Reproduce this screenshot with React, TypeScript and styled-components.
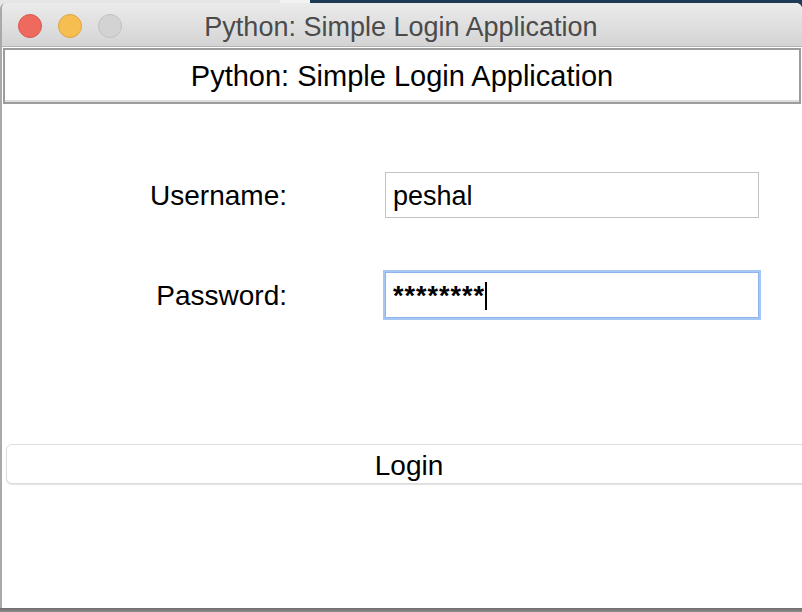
import React, { FC } from 'react';
import styled, { createGlobalStyle } from 'styled-components';

const GlobalStyle = createGlobalStyle`
  html, body {
    margin: 0;
    padding: 0;
  }
  body {
    font-family: "Liberation Sans", Arial, Helvetica, sans-serif;
    background: #1d3b57;
  }
`;

const Desktop = styled.div`
  width: 802px;
  height: 612px;
  display: flex;
  flex-direction: column;
  overflow: hidden;
  background: linear-gradient(to right, #e6e6e6 0, #e6e6e6 280px, #f2f2f2 280px, #f2f2f2 310px, #1d3b57 310px);
`;

const Window = styled.div`
  margin-top: 3px;
  height: 605px;
  display: flex;
  flex-direction: column;
  background: #ffffff;
  border-left: 2px solid #a9a9a9;
  border-radius: 6px 6px 0 0;
  overflow: hidden;
`;

const Shadow = styled.div`
  flex: 1;
  background: linear-gradient(to bottom, #6e6e6e, #8c8c8c);
`;

const TitleBar = styled.div`
  position: relative;
  height: 43px;
  flex-shrink: 0;
  display: flex;
  align-items: center;
  justify-content: center;
  background: linear-gradient(to bottom, #ebebeb, #d4d4d4);
  border-bottom: 1px solid #b4b4b4;
`;

const Lights = styled.div`
  position: absolute;
  left: 16px;
  top: 11px;
  display: flex;
  gap: 16px;
`;

const Light = styled.span<{ $fill: string; $edge: string }>`
  width: 22px;
  height: 22px;
  border-radius: 50%;
  background: ${(p) => p.$fill};
  border: 1px solid ${(p) => p.$edge};
`;

const WindowTitle = styled.div`
  font-size: 27px;
  color: #4b4b4b;
  margin-left: -2px;
  padding-top: 5px;
`;

const Content = styled.div`
  flex: 1;
  display: flex;
  flex-direction: column;
`;

const Header = styled.div`
  margin: 1px 1px 0 1px;
  height: 52px;
  display: flex;
  align-items: center;
  justify-content: center;
  border: 2px solid #9c9c9c;
  box-shadow: inset 0 -2px 0 #dedede;
  font-size: 29px;
  color: #000;
`;

const Form = styled.div`
  margin-top: 68px;
  display: grid;
  grid-template-columns: 285px 374px;
  grid-auto-rows: 46px;
  column-gap: 98px;
  row-gap: 54px;
`;

const Label = styled.div`
  align-self: center;
  text-align: right;
  font-size: 28px;
  color: #000;
  padding-top: 2px;
`;

const Entry = styled.div<{ $focused?: boolean }>`
  box-sizing: border-box;
  height: 46px;
  display: flex;
  align-items: center;
  padding: 3px 0 0 7px;
  font-size: 27px;
  color: #000;
  background: #fff;
  border: 1px solid ${(p) => (p.$focused ? '#8db4ec' : '#c3c3c3')};
  box-shadow: ${(p) => (p.$focused ? '0 0 0 2px #a6c7f5' : 'none')};
`;

const Masked = styled.span`
  letter-spacing: 1px;
  font-weight: bold;
`;

const Caret = styled.span`
  width: 2px;
  height: 28px;
  margin-top: -2px;
  background: #000;
`;

const LoginButton = styled.button`
  margin: 126px -10px 0 4px;
  height: 40px;
  font-family: inherit;
  font-size: 28px;
  color: #000;
  background: #fff;
  border: 1px solid #dddddd;
  border-radius: 6px;
  box-shadow: 0 1px 1px rgba(0, 0, 0, 0.12);
  padding: 3px 0 0 0;
`;

const App: FC = () => {
  return (
    <>
      <GlobalStyle />
      <Desktop>
        <Window>
          <TitleBar>
            <Lights>
              <Light $fill="#ee6a5f" $edge="#d85a4f" />
              <Light $fill="#f6be50" $edge="#dba543" />
              <Light $fill="#d3d3d3" $edge="#c0c0c0" />
            </Lights>
            <WindowTitle>Python: Simple Login Application</WindowTitle>
          </TitleBar>

          <Content>
            <Header>Python: Simple Login Application</Header>

            <Form>
              <Label>Username:</Label>
              <Entry>peshal</Entry>
              <Label>Password:</Label>
              <Entry $focused>
                <Masked>********</Masked>
                <Caret />
              </Entry>
            </Form>

            <LoginButton>Login</LoginButton>
          </Content>
        </Window>
        <Shadow />
      </Desktop>
    </>
  );
};

export default App;
